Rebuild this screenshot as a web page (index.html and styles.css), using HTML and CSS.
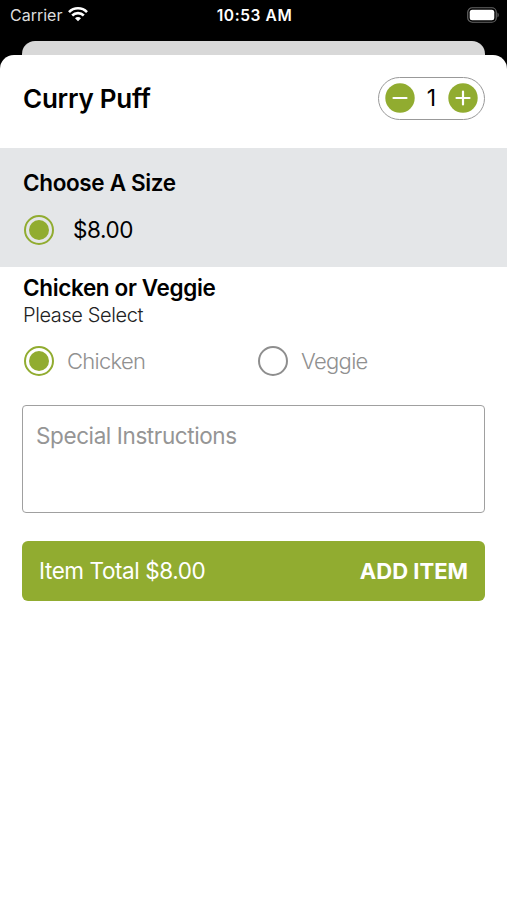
FILE: index.html
```html
<!DOCTYPE html>
<html lang="en">
<head>
<meta charset="utf-8">
<title>Curry Puff</title>
<link rel="stylesheet" href="styles.css">
</head>
<body>
<header class="status">
  <div class="carrier"><span>Carrier</span>
    <svg width="20" height="15" viewBox="0 0 20 15" fill="none" stroke="#fff" stroke-width="2.6"><path d="M1 5.1a12.6 12.6 0 0 1 18 0M4.2 8.5a8.2 8.2 0 0 1 11.6 0"/><path d="M10 14.2 7 11.3a4.2 4.2 0 0 1 6 0z" fill="#fff" stroke="none"/></svg>
  </div>
  <span class="time">10:53 AM</span>
  <svg class="battery" width="32" height="16" viewBox="0 0 32 16"><rect x=".75" y=".75" width="28.500" height="14.5" rx="4.5" fill="none" stroke="#666" stroke-width="1.2"/><rect x="2.700" y="2.7" width="24.600" height="10.600" rx="2.5" fill="#fff"/><path d="M30.500 5.500c1.600 1 1.600 4 0 5z" fill="#666"/></svg>
</header>
<div class="behind"></div>
<main class="sheet">
  <div class="title-row">
    <h1>Curry Puff</h1>
    <div class="stepper">
      <svg width="30" height="30" viewBox="0 0 30 30"><circle cx="15" cy="15" r="14.700" fill="#91ac30"/><path d="M8.500 15h13" stroke="#fff" stroke-width="2.2" stroke-linecap="round"/></svg>
      <span>1</span>
      <svg width="30" height="30" viewBox="0 0 30 30"><circle cx="15" cy="15" r="14.700" fill="#91ac30"/><path d="M8.500 15h13M15 8.500v13" stroke="#fff" stroke-width="2.2" stroke-linecap="round"/></svg>
    </div>
  </div>
  <section class="size">
    <h2>Choose A Size</h2>
    <div class="option"><i class="radio on"></i><span class="price">$8.00</span></div>
  </section>
  <section class="filling">
    <h2>Chicken or Veggie</h2>
    <p>Please Select</p>
    <div class="choices">
      <div class="option"><i class="radio on"></i><span>Chicken</span></div>
      <div class="option"><i class="radio"></i><span>Veggie</span></div>
    </div>
  </section>
  <div class="notes"><span>Special Instructions</span></div>
  <div class="add"><span class="total">Item Total $8.00</span><span class="cta">ADD ITEM</span></div>
</main>
</body>
</html>
```
FILE: styles.css
```css
* { box-sizing: border-box; }
body { margin: 0; height: 900px; background: #000; font-family: Inter, "Liberation Sans", sans-serif; color: #000; overflow: hidden; display: flex; flex-direction: column; }
h1, h2, p { margin: 0; }
svg { display: block; flex: none; }
span { white-space: nowrap; }
.status { height: 41px; padding: 0 8px 12px 10px; display: grid; grid-template-columns: 1fr auto 1fr; align-items: center; color: #fff; }
.carrier { display: flex; align-items: center; gap: 6px; font-size: 16px; color: #ddd; }
.time { font-size: 15.5px; font-weight: 600; letter-spacing: .6px; padding-top: 1px; }
.battery { justify-self: end; }
.behind { height: 14px; margin: 0 22px; background: #d8d8d8; border-radius: 13px 13px 0 0; }
.sheet { flex: 1; background: #fff; border-radius: 14px 14px 0 0; }
.title-row { height: 93px; padding: 0 22px 7px 23px; display: flex; align-items: center; justify-content: space-between; }
h1 { font-size: 26px; font-weight: 600; letter-spacing: -.25px; }
.stepper { width: 107px; height: 43px; border: 1.5px solid #999; border-radius: 22px; display: flex; align-items: center; justify-content: space-between; padding: 0 6px; font-size: 23px; }
.size { height: 119px; background: #e4e6e8; padding: 20px 23px 0; }
h2 { font-size: 22.5px; line-height: 30px; font-weight: 600; letter-spacing: -.35px; }
.option { display: flex; align-items: center; height: 32px; }
.size .option { margin-top: 16px; }
.radio { width: 30px; height: 30px; margin-left: 1px; border: 2px solid #8e8e8e; border-radius: 50%; flex: none; display: flex; align-items: center; justify-content: center; }
.radio.on { border-color: #91ac30; }
.radio.on::before { content: ""; width: 20px; height: 20px; border-radius: 50%; background: #91ac30; }
.price { margin-left: 19px; padding-bottom: 2px; font-size: 22.5px; letter-spacing: -.4px; }
.filling { height: 138px; padding: 6px 23px 0; }
.filling p { font-size: 20px; line-height: 24px; font-weight: 350; color: #222; letter-spacing: -.4px; }
.choices { display: grid; grid-template-columns: 234px 1fr; margin-top: 18px; color: #909090; font-size: 22px; font-weight: 350; letter-spacing: -.7px; }
.choices span { margin-left: 13px; }
.notes { height: 108px; margin: 0 22px; border: 1.5px solid #a0a0a0; border-radius: 4px; padding: 16px 13px; color: #959595; font-size: 22.5px; line-height: 28px; letter-spacing: -.4px; }
.add { height: 60px; margin: 28px 22px 0; padding: 0 17px; border-radius: 6px; background: #91ac30; color: #fff; display: flex; align-items: center; justify-content: space-between; font-size: 22.5px; letter-spacing: -.42px; }
.total { padding-bottom: 2px; }
.cta { font-weight: 700; font-size: 22px; letter-spacing: 0; }
```
